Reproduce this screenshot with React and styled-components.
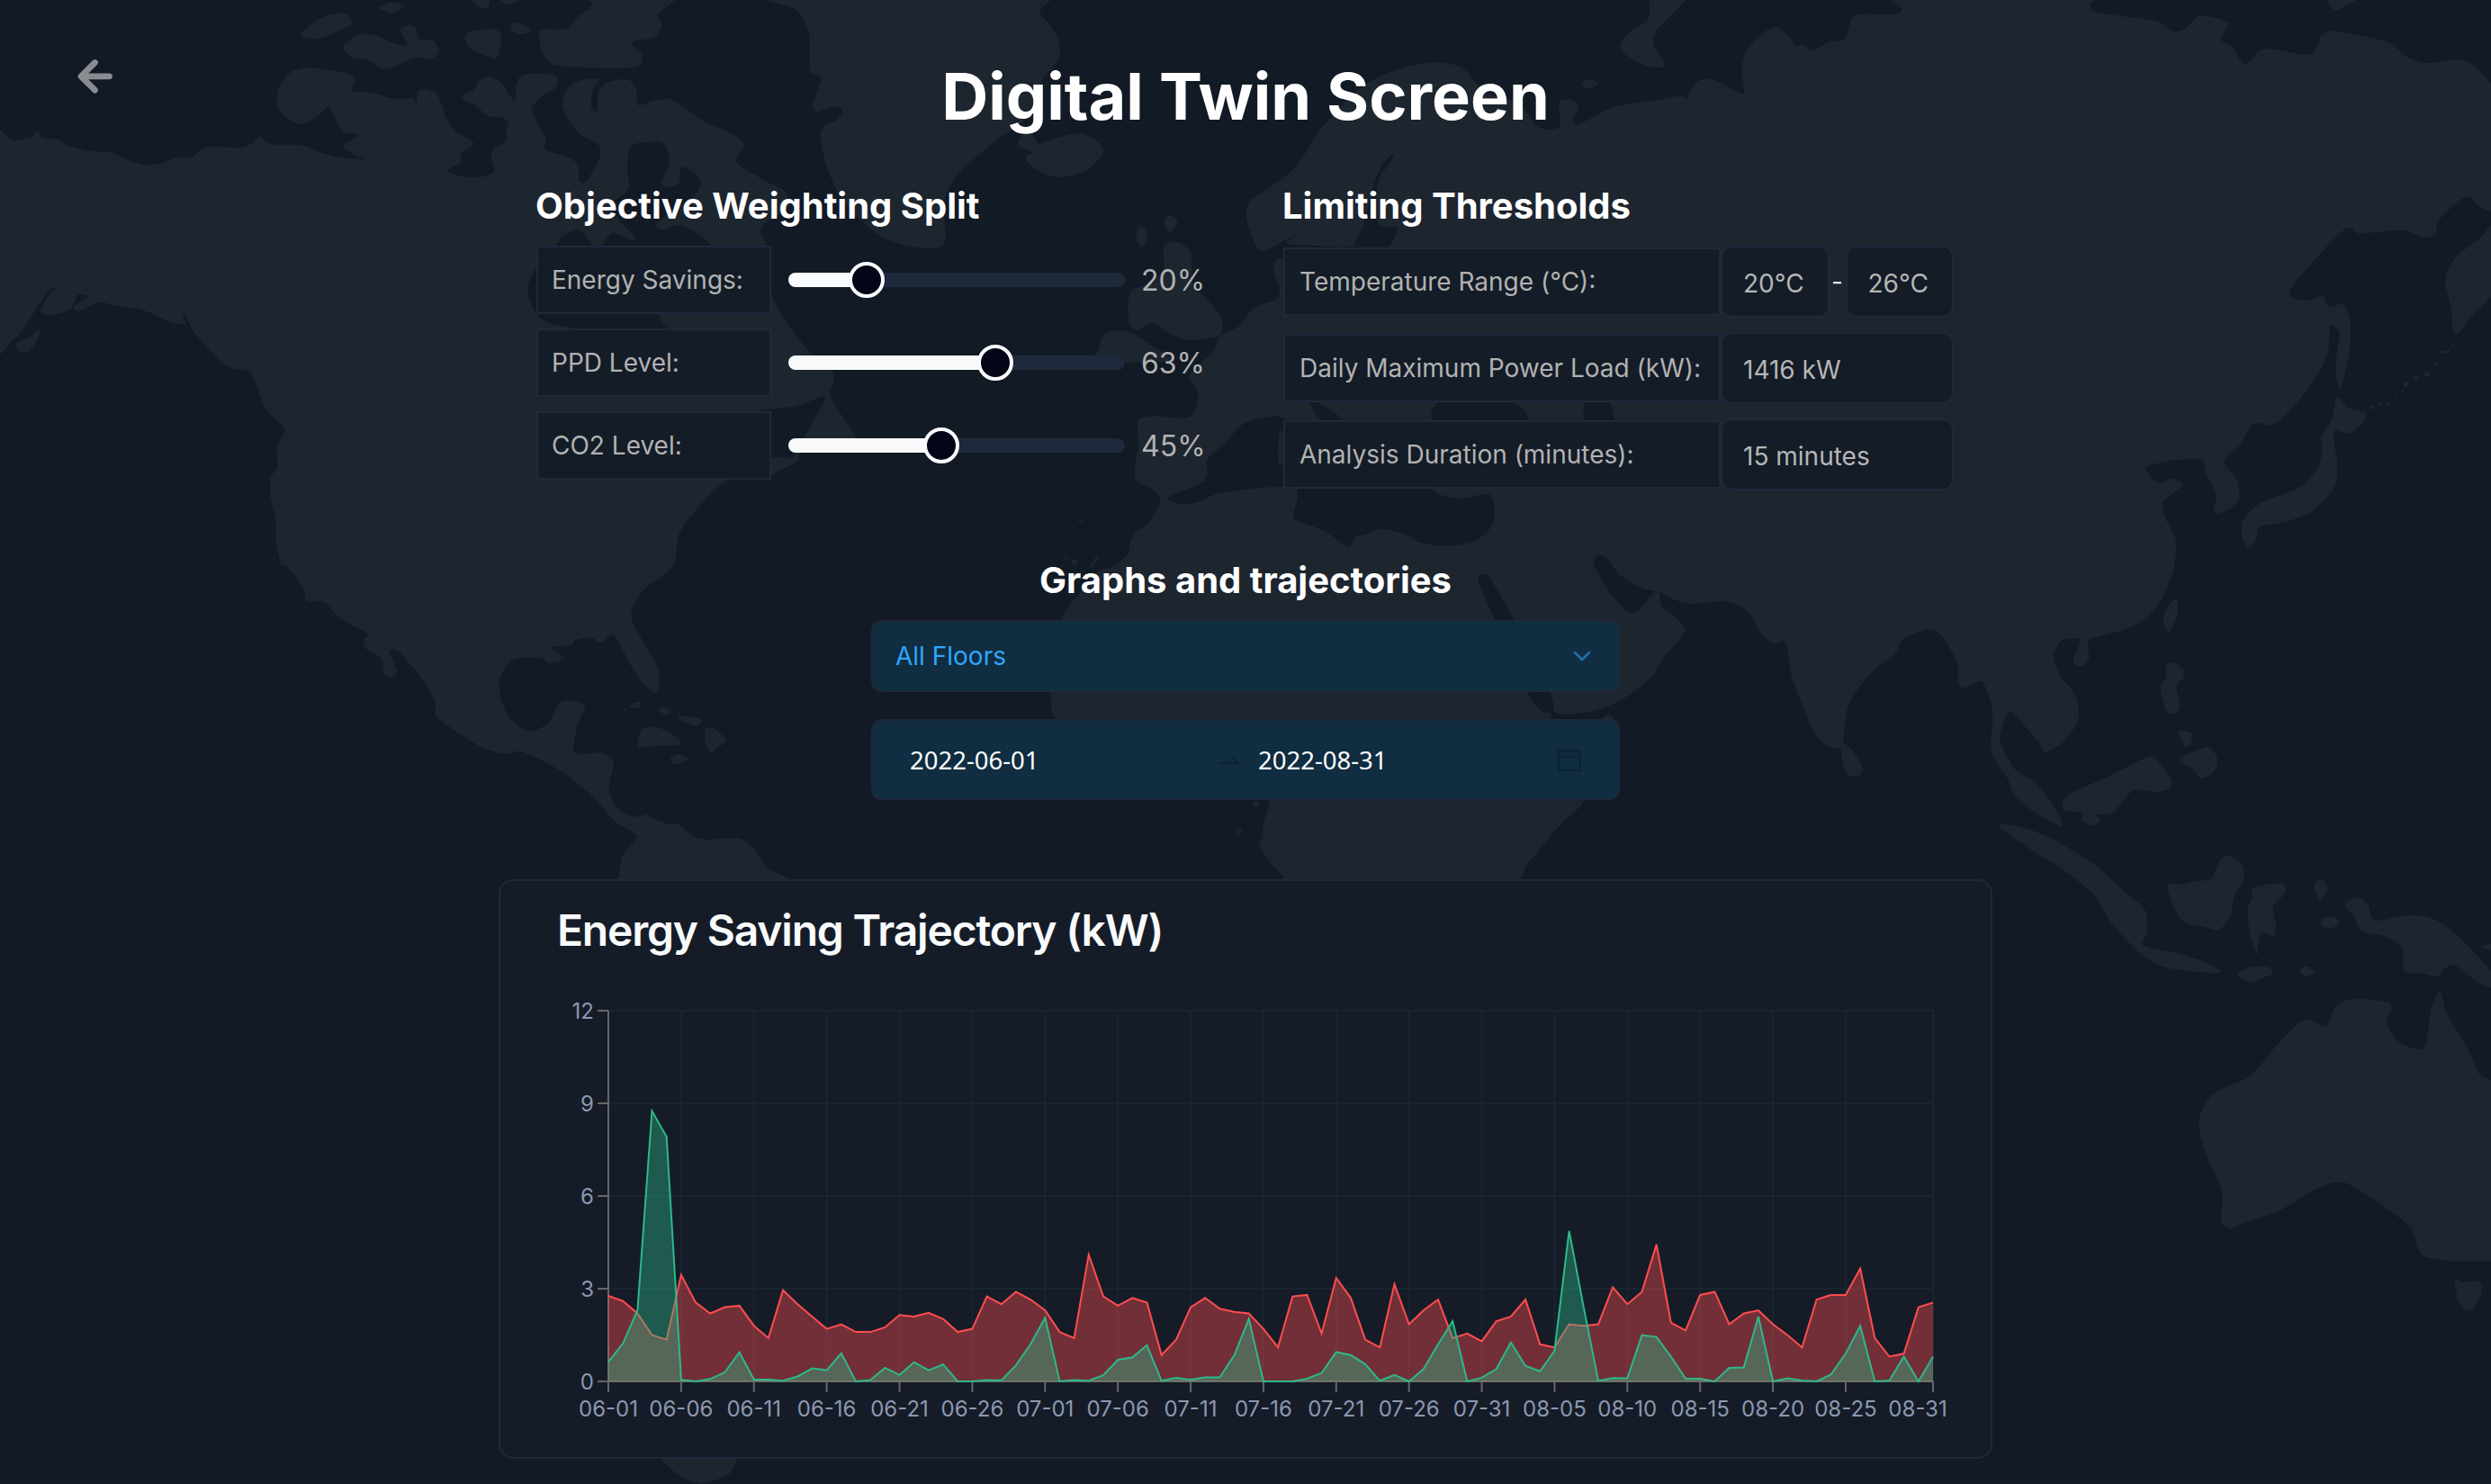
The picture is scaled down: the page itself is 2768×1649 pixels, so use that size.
import React from "react";
import styled, { createGlobalStyle } from "styled-components";

const GlobalStyle = createGlobalStyle`
  *, *::before, *::after { box-sizing: border-box; }
  html, body { margin: 0; padding: 0; background: #121a25; }
  body { font-family: Inter, "Liberation Sans", sans-serif; color: #fff; overflow: hidden; }
  h1, h2, h3 { margin: 0; }
`;

/* ---------- world map backdrop ---------- */

const parse = (text, dx = 0, dy = 0) =>
  text
    .trim()
    .split(/\s+/)
    .map((pair) => pair.split(",").map(Number))
    .map(([x, y]) => [x + dx, y + dy]);

// closed Catmull-Rom curve through the coast points
const coast = (pts) => {
  const n = pts.length;
  const at = (i) => pts[(i + n) % n];
  let d = `M${at(0)[0]} ${at(0)[1]}`;
  for (let i = 0; i < n; i += 1) {
    const [a, b, c, e] = [at(i - 1), at(i), at(i + 1), at(i + 2)];
    const k = 7;
    d += `C${(b[0] + (c[0] - a[0]) / k).toFixed(1)} ${(b[1] + (c[1] - a[1]) / k).toFixed(1)} ${(c[0] - (e[0] - b[0]) / k).toFixed(1)} ${(c[1] - (e[1] - b[1]) / k).toFixed(1)} ${c[0]} ${c[1]}`;
  }
  return `${d}Z`;
};

const MID = 1565;
const EAST = 3129;
const SOUTH = 1566;

const americas = parse(`-20,300 25,296 50,292 60,290 70,277 80,292 110,295 130,308 175,320 210,322 245,340 280,349 310,343 330,333 362,332 380,315 410,310 450,312 475,303 491,288 510,304 570,307 605,322 645,333 692,336 670,328 648,308 675,285 650,280 635,258 620,225 600,245 570,262 540,248 522,220 526,185 545,155 575,143 620,148 655,155 670,170 665,192 700,195 740,208 778,208 785,222 787,195 800,188 825,200 840,245 860,278 893,302 870,325 868,345 843,359 870,372 910,373 932,360 926,325 935,310 953,300 955,270 960,258 945,248 920,245 895,222 872,208 878,197 893,190 905,168 925,162 945,175 960,200 972,212 973,180 985,158 1020,155 1050,162 1048,185 1020,205 1003,230 1015,265 1030,290 1028,315 1060,328 1088,345 1092,380 1105,383 1130,335 1128,305 1095,285 1070,250 1060,215 1075,180 1105,167 1130,168 1118,190 1115,225 1125,235 1130,190 1150,172 1185,168 1200,190 1203,222 1235,212 1265,210 1300,235 1330,258 1385,285 1403,310 1388,342 1440,380 1480,405 1487,437 1436,479 1444,519 1453,614 1482,678 1525,741 1558,766 1573,798 1567,839 1617,925 1626,941 1525,941 1508,956 1503,975 1470,994 1453,1004 1375,1012 1310,1080 1280,1130 1272,1190 1250,1215 1210,1250 1190,1300 1210,1350 1240,1410 1242,1455 1230,1462 1200,1425 1180,1385 1160,1345 1148,1343 1132,1358 1115,1347 1085,1352 1078,1362 1040,1367 1064,1390 1035,1400 1020,1390 970,1392 945,1425 942,1460 955,1505 980,1535 1005,1543 1035,1525 1055,1485 1080,1480 1103,1492 1090,1530 1083,1590 1130,1590 1157,1610 1148,1665 1160,1700 1180,1719 1205,1725 1218,1720 1235,1730 1260,1740 1280,1742 1310,1768 1340,1773 1390,1770 1420,1790 1450,1835 1490,1858 1500,1900 1165,1900 1167,1850 1175,1805 1200,1765 1160,1735 1120,1685 1060,1630 985,1588 955,1592 915,1582 890,1566 825,1515 820,1480 790,1425 750,1375 735,1377 748,1415 740,1430 725,1425 718,1390 690,1370 686,1350 693,1338 640,1305 612,1272 578,1268 572,1240 540,1195 530,1192 520,1140 520,1100 510,1050 510,1010 523,985 523,940 537,908 505,870 490,835 472,787 430,775 395,740 355,690 320,680 270,655 215,645 185,638 150,657 138,648 165,626 140,620 100,608 75,640 50,685 25,718 -20,728`);

const eurasia = [
  ...parse(`830,395 880,350 920,280 960,230 1000,185 1060,150 1130,132 1190,142 1230,190 1250,200 1300,220 1335,268 1375,268 1375,215 1400,212 1412,228 1400,250 1410,262 1435,250 1480,225 1560,211`, MID),
  ...parse(`40,203 52,207 65,180 85,166 110,172 145,193 160,195 155,150 165,105 195,70 220,58 240,72 258,97 270,93 290,107 320,88 350,82 362,40 380,30 440,30 457,20 455,-20 812,-20 812,8 822,25 880,35 940,45 965,65 990,62 1020,33 1072,48 1058,82 1080,100 1105,135 1140,103 1220,115 1240,100 1248,75 1275,66 1370,88 1410,120 1450,133 1510,125 1545,148 1575,190 1620,300 1600,445 1568,445 1545,436 1520,415 1470,465 1463,495 1440,502 1400,486 1320,493 1290,486 1190,612 1220,635 1250,625 1263,648 1290,643 1303,680 1300,750 1283,822 1275,770 1282,705 1265,687 1260,745 1230,810 1165,893 1120,895 1095,940 1065,975 1090,1015 1092,1055 1070,1078 1045,1082 1050,1045 1030,1000 1022,970 970,972 918,988 942,1020 965,1010 987,1024 950,1060 955,1095 973,1140 970,1200 945,1270 905,1315 860,1335 810,1352 810,1390 795,1408 780,1395 793,1352 760,1352 743,1385 755,1425 785,1470 790,1520 762,1566 727,1588 715,1566 690,1535 660,1502 645,1540 643,1568 670,1624 705,1651 740,1696 760,1744 715,1721 670,1681 655,1641 630,1601 625,1566 628,1500 608,1440 575,1453 563,1440 560,1395 518,1330 460,1350 445,1380 400,1420 365,1470 352,1510 345,1576 325,1578 305,1566 285,1530 250,1430 238,1357 215,1360 190,1335 165,1290 125,1270 60,1275 25,1265 0,1250`, EAST),
  ...parse(`1530,1242 1490,1215 1465,1180 1450,1173 1440,1190 1470,1250 1505,1292 1525,1288 1560,1245 1568,1280 1590,1300 1612,1325 1605,1345 1565,1400 1550,1430 1490,1480 1430,1503 1370,1506 1358,1462 1290,1310 1255,1240 1237,1213 1222,1225 1250,1300 1315,1462 1340,1500 1362,1508 1365,1520 1470,1560 1422,1690 1377,1742 1332,1802 1315,1825 1303,1856 1290,1900 870,1900 857,1858 845,1840 828,1818 809,1783 816,1768 817,1742 825,1707 825,1690 780,1600 500,1600 425,1518 418,1490 417,1462 437,1308 470,1255 500,1210 535,1195 562,1170 565,1145 580,1120 600,1105 622,1060 610,1035 578,1015 575,985 582,945 580,895 588,882 618,879 660,883 685,874 694,830 677,792 723,741 736,709 770,690 800,650 844,630 846,602 837,576 846,545 900,560 990,522 960,521 862,515 876,500 865,503 825,527 805,522 785,460 792,425`, MID),
];

const landShapes = [
  americas,
  eurasia,
  // Alaskan and arctic islands
  parse("145,622 130,655 88,665 78,652 100,614 125,610"),
  parse("75,695 70,720 50,745 35,740 30,725 50,715"),
  parse("567,73 600,82 640,65 663,50 655,30 625,30 595,45"),
  parse("715,17 740,28 762,12 735,5"),
  parse("647,100 665,122 695,127 720,146 745,140 780,122 815,125 827,105 815,85 790,82 785,60 770,53 755,65 768,95 740,90 710,75 680,72 665,80"),
  parse("877,85 885,67 930,62 945,75 940,115 930,123 890,105"),
  parse("962,55 975,48 1003,63 985,72 970,68"),
  parse("885,-5 910,18 922,12 920,-5"),
  parse("940,-5 960,10 985,-5"),
  parse("1105,-15 1118,10 1090,35 1065,62 1020,62 1018,90 1030,125 1060,140 1195,142 1210,115 1190,90 1235,78 1248,52 1240,30 1275,-15"),
  // Greenland
  parse("1435,-15 1500,20 1525,70 1528,150 1548,165 1533,220 1540,236 1565,228 1585,227 1588,240 1575,255 1555,265 1547,295 1565,370 1595,430 1655,495 1715,520 1770,523 1783,500 1780,430 1805,370 1875,300 1935,250 1965,170 1997,120 1993,75 1960,25 1947,-15"),
  // Caribbean
  parse("1188,1488 1205,1482 1208,1492 1192,1496"),
  parse("1174,1500 1183,1494 1181,1500"),
  parse("1243,1500 1250,1493 1265,1502 1255,1510"),
  parse("1278,1512 1300,1514 1325,1522 1312,1533 1285,1522"),
  parse("1202,1570 1207,1545 1220,1535 1250,1540 1278,1560 1280,1572 1210,1577"),
  parse("1330,1540 1345,1538 1370,1564 1350,1580 1342,1592 1330,1568"),
  parse("1264,1602 1280,1592 1297,1603 1275,1614"),
  parse("1225,1500 1245,1515 1280,1550 1320,1567 1360,1555 1380,1540 1378,1500", 0, SOUTH),
  // North Atlantic and British Isles
  parse("355,300 362,285 380,283 395,303 430,290 475,282 505,300 515,322 490,355 460,370 420,373 385,355 368,333 382,322 358,310", MID),
  parse("585,477 600,495 588,522 577,500", MID),
  parse("640,454 655,468 642,490 630,470", MID),
  parse("630,520 655,511 678,530 683,570 685,600 735,665 735,708 680,718 640,705 610,682 575,697 562,665 568,615 600,600 628,570", MID),
  parse("520,703 560,700 600,725 640,762 510,762 508,735", MID),
  parse("1418,178 1430,168 1450,175 1430,188", MID),
  parse("1550,-15 1543,40 1510,65 1490,100 1520,130 1560,143 1575,135 1553,95 1558,65 1575,45 1620,-15", MID),
  parse("469,1096 476,1098 474,1103 469,1102", MID),
  parse("440,1175 448,1178 447,1182", MID),
  parse("454,1184 467,1184 461,1195", MID),
  parse("503,1174 507,1176 494,1197 490,1195", MID),
  parse("799,1695 806,1692 810,1700 804,1706 799,1702", MID),
  parse("767,1758 773,1751 777,1756 771,1764", MID),
  parse("1455,1522 1465,1509 1478,1515 1476,1524", MID),
  // East Asia
  parse("1262,-15 1265,15 1285,18 1330,-15", EAST),
  parse("1590,450 1550,500 1500,545 1482,590 1492,650 1500,707 1530,670 1590,590", EAST),
  parse("1278,838 1300,862 1333,873 1325,895 1300,915 1272,912 1278,980 1272,1030 1230,1080 1180,1102 1132,1113 1125,1140 1108,1158 1097,1120 1105,1090 1140,1058 1205,1030 1240,990 1250,950 1248,920 1268,885", EAST),
  parse("976,1263 976,1300 960,1335 950,1310 958,1283", EAST),
  parse("955,1405 970,1400 987,1412 988,1432 975,1450 982,1490 975,1505 958,1505 945,1455 955,1430", EAST),
  parse("980,1545 1003,1548 1002,1570 992,1579 985,1564", EAST),
  // South-east Asia
  parse("345,5 365,20 383,55 375,73 355,70 345,45", EAST, SOUTH),
  parse("760,130 775,110 850,72 920,33 940,42 965,80 960,100 935,107 895,102 875,125 855,150 825,155 832,167 815,178 795,165 797,150 765,145", EAST, SOUTH),
  parse("980,40 1010,20 1035,12 1052,35 1045,65 1020,77 1003,55", EAST, SOUTH),
  parse("640,177 680,180 740,205 820,260 880,320 915,355 920,400 913,430 975,447 1020,462 1060,487 1000,485 940,472 895,435 850,380 820,325 760,270 700,228", EAST, SOUTH),
  parse("958,303 985,302 1005,295 1040,290 1055,255 1070,240 1095,255 1102,290 1085,325 1075,370 1055,398 1030,392 990,382 970,350", EAST, SOUTH),
  parse("1118,310 1140,303 1175,300 1180,320 1157,350 1163,390 1157,413 1138,402 1130,420 1126,450 1112,395 1110,350 1118,330", EAST, SOUTH),
  parse("1236,300 1247,290 1259,308 1247,335 1237,318", EAST, SOUTH),
  parse("1250,375 1270,370 1281,382 1270,393 1250,390", EAST, SOUTH),
  parse("1090,492 1115,476 1150,477 1155,492 1135,500 1115,508", EAST, SOUTH),
  parse("1207,485 1218,474 1235,485 1220,496", EAST, SOUTH),
  parse("1292,345 1315,330 1335,342 1350,378 1410,367 1460,375 1510,415 1580,500 1580,522 1545,510 1500,473 1480,480 1465,497 1440,490 1405,485 1400,435 1370,412 1325,400 1310,370", EAST, SOUTH),
  parse("1550,434 1580,425 1580,442", EAST, SOUTH),
  // Australia and Tasmania
  parse("1472,528 1485,575 1525,650 1545,700 1590,760 1590,1065 1530,1097 1450,1090 1430,1070 1415,1025 1350,970 1300,935 1270,932 1230,950 1170,990 1100,1018 1080,1028 1060,1015 1060,945 1030,870 1017,805 1035,755 1070,728 1115,705 1165,640 1205,595 1225,587 1257,602 1275,560 1305,544 1377,553 1372,595 1395,635 1437,650 1448,620 1455,565", EAST, SOUTH),
  parse("1500,1133 1515,1142 1545,1140 1550,1165 1530,1202 1510,1190 1502,1160", EAST, SOUTH),
];

const seaShapes = [
  // Hudson Bay
  parse("1190,310 1220,300 1252,303 1262,345 1247,385 1262,396 1281,385 1285,352 1320,378 1310,410 1240,470 1250,485 1280,475 1310,490 1340,519 1330,560 1245,660 1262,700 1200,720 1120,710 1075,692 1030,680 1005,650 995,608 1012,565 1040,535 1060,500 1088,486 1100,492 1120,520 1135,518 1155,492 1190,508 1197,498 1170,470 1155,430 1185,400 1183,355"),
  // Gulf of St Lawrence
  parse("1556,838 1500,858 1430,868 1435,900 1440,960 1470,965 1495,966 1510,935 1530,895"),
  // Inside passage
  parse("345,660 360,690 375,730 385,742 368,722 352,690"),
  // Mediterranean, Corsica side
  parse("637,1053 655,1040 700,1020 712,1000 712,970 745,935 780,895 830,880 860,885 1100,960 1135,1033 1165,1050 1200,1052 1240,1043 1252,1065 1248,1110 1215,1143 1160,1153 1110,1145 1085,1128 1040,1117 1015,1127 990,1135 978,1155 930,1120 878,1098 875,1080 882,1045 865,1027 740,1040 695,1060 665,1065", MID),
  parse("903,848 925,852 970,890 930,890", MID),
  parse("1145,892 1155,846 1280,846 1310,892", MID),
  parse("1424,892 1427,846 1468,846 1476,892", MID),
  // Baltic
  parse("1040,361 1028,380 1006,475 988,530 1045,530 1071,481 1038,478 1030,440 1032,390", MID),
  parse("1062,324 1057,343 1034,373 1040,350", MID),
];

const lateLand = [parse("848,908 856,930 857,980 845,972", MID)];

const kurils = [
  [1495, 730, 2.5], [1486, 743, 4], [1477, 744, 4], [1464, 768, 3], [1447, 790, 5], [1427, 798, 5], [1408, 812, 5],
  [1402, 825, 3], [1390, 838, 2.5], [1375, 852, 4], [1360, 854, 4], [1345, 861, 4],
];

const MapSvg = styled.svg`
  position: absolute;
  inset: 0;
  width: 100%;
  height: 100%;
`;

function WorldMap() {
  return (
    <MapSvg viewBox="0 0 4697 3134" preserveAspectRatio="none" aria-hidden="true">
      <g fill="#1d252f">
        {landShapes.map((s, i) => <path key={i} d={coast(s)} />)}
        {kurils.map(([x, y, r]) => <circle key={x} cx={x + EAST} cy={y} r={r} />)}
      </g>
      <g fill="#121a25">{seaShapes.map((s, i) => <path key={i} d={coast(s)} />)}</g>
      <g fill="#1d252f">{lateLand.map((s, i) => <path key={i} d={coast(s)} />)}</g>
    </MapSvg>
  );
}

/* ---------- page frame ---------- */

const Page = styled.div`
  position: relative;
  width: 2768px;
  height: 1649px;
  overflow: hidden;
  background: #121a25;
`;

const Content = styled.main`
  position: relative;
  display: flex;
  flex-direction: column;
  align-items: center;
  padding-top: 64px;
`;

const Header = styled.header`
  width: 100%;
  display: grid;
  grid-template-columns: 300px 1fr 300px;
  align-items: start;
  height: 141px;
`;

const BackButton = styled.button`
  justify-self: start;
  margin-left: 84px;
  padding: 0;
  border: 0;
  background: none;
  color: #8a8c91;
  line-height: 0;
`;

const Title = styled.h1`
  padding-top: 3px;
  text-align: center;
  font-size: 72px;
  line-height: 80px;
  font-weight: 700;
`;

const Heading = styled.h2`
  margin-left: ${(p) => p.$nudge || "0"};
  font-size: 40px;
  line-height: 48px;
  font-weight: 700;
`;

/* ---------- settings ---------- */

const Settings = styled.section`
  width: 1576px;
  display: grid;
  grid-template-columns: 830px 1fr;
  align-items: start;
`;

const Group = styled.div`
  display: flex;
  flex-direction: column;
`;

const Rows = styled.div`
  display: flex;
  flex-direction: column;
  gap: 16px;
  margin-top: 20px;
`;

const SliderRow = styled.div`
  display: grid;
  grid-template-columns: 261px 374px auto;
  column-gap: 19px;
  align-items: center;
  height: 76px;
`;

const FieldRow = styled.div`
  display: grid;
  grid-template-columns: 486px 259px;
  align-items: center;
  height: 80px;
`;

const Label = styled.div`
  height: 76px;
  padding: 0 0 0 ${(p) => p.$inset || "16px"};
  display: flex;
  align-items: center;
  border: 2px solid #1e293b;
  background: #141c27;
  color: #b2b2b2;
  font-size: 28px;
  line-height: 40px;
  white-space: nowrap;
`;

const Track = styled.div`
  position: relative;
  height: 16px;
  border-radius: 8px;
  background: #1e293b;
`;

const Range = styled.div`
  height: 100%;
  border-radius: 8px 0 0 8px;
  background: #f8fafc;
`;

const Thumb = styled.div`
  position: absolute;
  top: -12px;
  width: 40px;
  height: 40px;
  margin-left: -20px;
  border-radius: 50%;
  border: 4px solid #f8fafc;
  background: #020617;
`;

const Percent = styled.span`
  margin-left: -1px;
  padding-top: 1px;
  color: #b2b2b2;
  font-size: 32px;
  line-height: 40px;
`;

const Fields = styled.div`
  display: flex;
  align-items: center;
`;

const Field = styled.div`
  flex: 1;
  height: 80px;
  padding: 4px 0 0 23px;
  display: flex;
  align-items: center;
  border: 2px solid #1e293b;
  border-radius: 12px;
  background: #141c27;
  color: #b6b6b6;
  font-size: 28px;
  line-height: 40px;
`;

const Dash = styled.span`
  color: #e2e4e8;
  font-size: 28px;
  line-height: 40px;
  width: 18px;
  text-align: center;
`;

/* ---------- filters ---------- */

const Filters = styled.section`
  width: 832px;
  margin-top: 76px;
  display: flex;
  flex-direction: column;
  text-align: center;
`;

const Picker = styled.div`
  height: ${(p) => p.$height};
  margin-top: ${(p) => p.$gap};
  border: 2px solid #1e293b;
  border-radius: 12px;
  background: #102d41;
  display: flex;
  align-items: center;
`;

const FloorName = styled.span`
  flex: 1;
  padding-left: 25px;
  text-align: left;
  color: #2fa6ff;
  font-size: 28px;
  line-height: 40px;
`;

const Chevron = styled.svg`
  width: 32px;
  height: 32px;
  margin-right: 24px;
  color: #2fa6ff;
  opacity: 0.55;
`;

const DateText = styled.span`
  width: ${(p) => p.$width};
  padding-top: 2px;
  text-align: left;
  font-family: "Noto Sans", sans-serif;
  font-size: 27.5px;
  line-height: 40px;
`;

const DateIcon = styled.svg`
  flex: none;
  margin-right: ${(p) => p.$right || "0"};
  color: #0d2331;
`;

/* ---------- chart ---------- */

const Card = styled.section`
  width: 1660px;
  height: 644px;
  margin-top: 88px;
  border: 2px solid #1e293b;
  border-radius: 16px;
  background: #151c27;
  display: flex;
  flex-direction: column;
`;

const CardTitle = styled.h3`
  padding: 31px 0 0 63px;
  height: 78px;
  color: #f8fafc;
  font-size: 48px;
  line-height: 47px;
  font-weight: 600;
  letter-spacing: -1.2px;
`;

const ChartSvg = styled.svg`
  width: 1656px;
  height: 562px;
  font-size: 24px;
`;

const baseline = [
  2.77, 2.6, 2.2, 1.5, 1.35, 3.45, 2.55, 2.2, 2.4, 2.45, 1.8, 1.4, 2.95, 2.5, 2.1, 1.7, 1.85, 1.6, 1.6, 1.75, 2.15, 2.1,
  2.22, 2.02, 1.6, 1.7, 2.75, 2.5, 2.9, 2.65, 2.3, 1.6, 1.4, 4.1, 2.75, 2.45, 2.7, 2.55, 0.85, 1.35, 2.4, 2.7, 2.35,
  2.25, 2.2, 1.7, 1.1, 2.75, 2.8, 1.55, 3.35, 2.7, 1.35, 1.1, 3.15, 1.85, 2.3, 2.65, 1.4, 1.55, 1.3, 1.95, 2.1, 2.65,
  1.2, 1.1, 1.85, 1.8, 1.85, 3.05, 2.5, 2.9, 4.43, 1.9, 1.65, 2.8, 2.9, 1.85, 2.2, 2.3, 1.85, 1.5, 1.1, 2.65, 2.8, 2.8,
  3.65, 1.4, 0.8, 0.9, 2.4, 2.55,
];

const optimised = [
  0.63, 1.23, 2.3, 8.75, 7.92, 0.05, 0, 0.08, 0.29, 0.94, 0.06, 0.06, 0.02, 0.16, 0.42, 0.36, 0.91, 0, 0.04, 0.44, 0.21,
  0.62, 0.36, 0.55, 0, 0, 0.04, 0.03, 0.52, 1.2, 2.06, 0, 0.04, 0.02, 0.2, 0.7, 0.78, 1.17, 0.02, 0.12, 0.05, 0.13, 0.13,
  0.85, 2.03, 0, 0, 0, 0.09, 0.27, 0.95, 0.85, 0.56, 0.02, 0.21, 0, 0.4, 1.2, 1.95, 0, 0.12, 0.4, 1.26, 0.5, 0.33, 1,
  4.87, 2.4, 0.02, 0.11, 0.1, 1.5, 1.44, 0.8, 0.09, 0.09, 0, 0.44, 0.45, 2.1, 0, 0.1, 0.03, 0, 0.23, 0.9, 1.8, 0, 0.03,
  0.8, 0, 0.8,
];

const ticks = [
  ["06-01", 0], ["06-06", 5], ["06-11", 10], ["06-16", 15], ["06-21", 20], ["06-26", 25], ["07-01", 30], ["07-06", 35],
  ["07-11", 40], ["07-16", 45], ["07-21", 50], ["07-26", 55], ["07-31", 60], ["08-05", 65], ["08-10", 70], ["08-15", 75],
  ["08-20", 80], ["08-25", 85], ["08-31", 91],
];

const LEFT = 120;
const RIGHT = 1592;
const TOP = 66;
const BOTTOM = 478;
const px = (i) => LEFT + (i * (RIGHT - LEFT)) / 91;
const py = (v) => BOTTOM - (v * (BOTTOM - TOP)) / 12;

function Area({ data, color }) {
  const line = data.map((v, i) => `${px(i).toFixed(1)},${py(v).toFixed(1)}`).join(" ");
  return (
    <g>
      <polygon points={`${LEFT},${BOTTOM} ${line} ${RIGHT},${BOTTOM}`} fill={color} fillOpacity="0.4" />
      <polyline points={line} fill="none" stroke={color} strokeWidth="2" />
    </g>
  );
}

function Chart() {
  return (
    <ChartSvg viewBox="0 0 1656 562">
      <g stroke="#182531" strokeWidth="2">
        {[3, 6, 9, 12].map((v) => <line key={v} x1={LEFT} x2={RIGHT} y1={py(v)} y2={py(v)} />)}
        {ticks.slice(1).map(([name, i]) => <line key={name} x1={px(i)} x2={px(i)} y1={TOP} y2={BOTTOM} />)}
      </g>
      <g stroke="#666" strokeWidth="2">
        <line x1={LEFT} x2={LEFT} y1={TOP} y2={BOTTOM} />
        <line x1={LEFT} x2={RIGHT} y1={BOTTOM} y2={BOTTOM} />
        {[0, 3, 6, 9, 12].map((v) => <line key={v} x1={LEFT - 12} x2={LEFT} y1={py(v)} y2={py(v)} />)}
        {ticks.map(([name, i]) => <line key={name} x1={px(i)} x2={px(i)} y1={BOTTOM} y2={BOTTOM + 12} />)}
      </g>
      <Area data={baseline} color="#ff4d4f" />
      <Area data={optimised} color="#2eb88a" />
      <g fill="#8c98b0">
        {[0, 3, 6, 9, 12].map((v) => <text key={v} x={LEFT - 16} y={py(v) + 9} textAnchor="end">{v}</text>)}
        {ticks.map(([name, i]) => (
          <text key={name} x={i === 91 ? px(i) - 17 : px(i)} y={BOTTOM + 39} textAnchor="middle">{name}</text>
        ))}
      </g>
    </ChartSvg>
  );
}

const weights = [["Energy Savings:", 20], ["PPD Level:", 63], ["CO2 Level:", 45]];

function WeightSlider({ value }) {
  const offset = 20 - (value / 50) * 20;
  return (
    <Track>
      <Range style={{ width: `${value}%` }} />
      <Thumb style={{ left: `calc(${value}% + ${offset}px)` }} />
    </Track>
  );
}

export default function App() {
  return (
    <Page>
      <GlobalStyle />
      <WorldMap />
      <Content>
        <Header>
          <BackButton aria-label="Back">
            <svg width="44" height="42" viewBox="0 0 44 42" fill="none" stroke="currentColor" strokeWidth="6.8" strokeLinecap="round" strokeLinejoin="round">
              <path d="M37.5 20.8H7M21.5 5.5L6 20.8L21.5 36.2" />
            </svg>
          </BackButton>
          <Title>Digital Twin Screen</Title>
        </Header>
        <Settings>
          <Group>
            <Heading $nudge="-1px">Objective Weighting Split</Heading>
            <Rows>
              {weights.map(([name, value]) => (
                <SliderRow key={name}>
                  <Label $inset="15px">{name}</Label>
                  <WeightSlider value={value} />
                  <Percent>{value}%</Percent>
                </SliderRow>
              ))}
            </Rows>
          </Group>
          <Group>
            <Heading $nudge="-1px">Limiting Thresholds</Heading>
            <Rows>
              <FieldRow>
                <Label>Temperature Range (°C):</Label>
                <Fields>
                  <Field>20°C</Field>
                  <Dash>-</Dash>
                  <Field>26°C</Field>
                </Fields>
              </FieldRow>
              <FieldRow>
                <Label>Daily Maximum Power Load (kW):</Label>
                <Field>1416 kW</Field>
              </FieldRow>
              <FieldRow>
                <Label>Analysis Duration (minutes):</Label>
                <Field>15 minutes</Field>
              </FieldRow>
            </Rows>
          </Group>
        </Settings>
        <Filters>
          <Heading>Graphs and trajectories</Heading>
          <Picker $height="80px" $gap="20px">
            <FloorName>All Floors</FloorName>
            <Chevron viewBox="0 0 24 24" fill="none" stroke="currentColor" strokeWidth="2" strokeLinecap="round" strokeLinejoin="round">
              <path d="m6 9 6 6 6-6" />
            </Chevron>
          </Picker>
          <Picker $height="90px" $gap="30px">
            <DateIcon width="41" height="1" />
            <DateText $width="343px">2022-06-01</DateText>
            <DateIcon width="24" height="24" viewBox="0 0 24 24" fill="none" stroke="currentColor" strokeWidth="2" $right="20px">
              <path d="M0 16H22L15 8.5" />
            </DateIcon>
            <DateText $width="333px">2022-08-31</DateText>
            <DateIcon width="26" height="26" viewBox="0 0 26 26" fill="none" stroke="currentColor" strokeWidth="2">
              <path d="M1 3.5H25V25H1ZM1 10H25M8 0V6M18 0V6" />
            </DateIcon>
          </Picker>
        </Filters>
        <Card>
          <CardTitle>Energy Saving Trajectory (kW)</CardTitle>
          <Chart />
        </Card>
      </Content>
    </Page>
  );
}
